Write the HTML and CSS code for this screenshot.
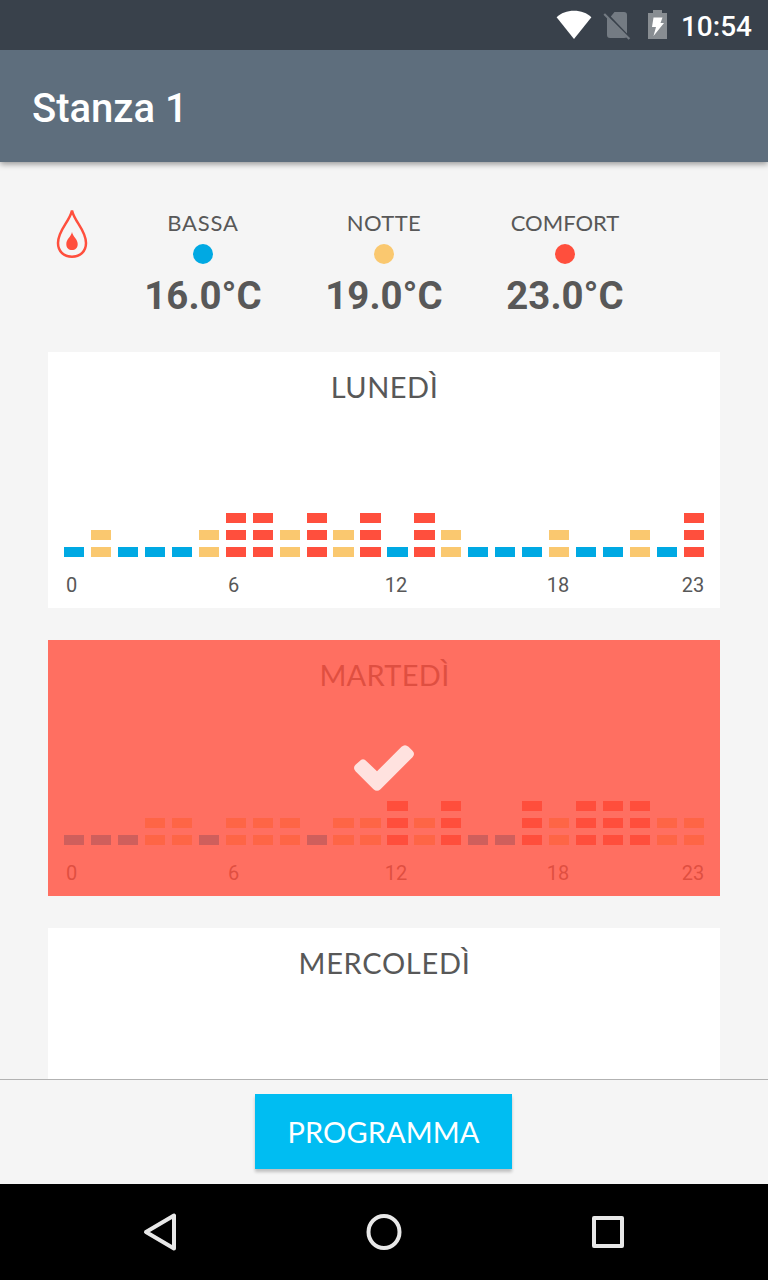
FILE: index.html
```html
<!DOCTYPE html>
<html lang="it">
<head>
    <meta charset="UTF-8">
    <title>Stanza 1</title>
    <link rel="stylesheet" href="styles.css">
</head>
<body>
    <div class="status-bar">
        <svg class="wifi" width="36" height="29" viewBox="0 0 36 29"><path d="M18 29L.6 7.2C5 3 11 .8 18 .8S31 3 35.4 7.2z" fill="#fff"/></svg>
        <svg class="no-sim" width="28" height="28" viewBox="0 0 28 28">
            <path d="M11.500 0H21q3 0 3 3v18.500L7.800 4.500zM4 5L24 25q-1 1-3 1H7q-3 0-3-3z" fill="#747b83"/>
            <path d="M1.200 2L26.400 27" stroke="#747b83" stroke-width="2.200"/>
        </svg>
        <svg class="battery" width="20" height="29" viewBox="0 0 20 29">
            <path d="M0 3h5V0h9v3h5v26H0z" fill="#888d92"/>
            <path d="M5.500 7.500h9L12.500 13H16L5.500 26l2.500-9H4z" fill="#fff"/>
        </svg>
        <span class="clock">10:54</span>
    </div>

    <div class="header">
        <h1>Stanza 1</h1>
    </div>

    <div class="content">
        <div class="legend">
            <svg class="flame" width="32" height="50" viewBox="0 0 32 50">
                <path d="M16 2.500C13.500 14 2 22 2 35c0 8 5.500 13.700 14 13.700s14-5.700 14-13.700C30 22 18.500 14 16 2.500z" fill="none" stroke="#ff4f3d" stroke-width="2.500"/>
                <path d="M16 24c-1 5-5.700 7-5.700 12 0 4 2.500 6 5.700 6s5.700-2 5.700-6c0-5-4.700-7-5.700-12z" fill="#ff4f3d"/>
            </svg>
            <div class="temp">
                <span class="temp-name bassa">BASSA</span>
                <span class="dot low"></span>
                <span class="temp-value">16.0°C</span>
            </div>
            <div class="temp">
                <span class="temp-name notte">NOTTE</span>
                <span class="dot night"></span>
                <span class="temp-value">19.0°C</span>
            </div>
            <div class="temp">
                <span class="temp-name comfort">COMFORT</span>
                <span class="dot comf"></span>
                <span class="temp-value">23.0°C</span>
            </div>
        </div>

        <div class="day">
            <h2 class="lun">LUNEDÌ</h2>
            <div class="chart" data-levels="121112332323132111211213"></div>
            <div class="hours"></div>
        </div>

        <div class="day">
            <h2 class="mar">MARTEDÌ</h2>
            <div class="chart" data-levels="111221222122323113233322"></div>
            <div class="hours"></div>
            <div class="selected">
                <svg width="60" height="46" viewBox="0 0 60 46"><path d="M5.500 16.200Q9 12.500 12.500 16.200L23 26.300 47.500 1.800Q51-1.500 54.500 1.800L58.500 5.800Q61.500 9 58.500 12.200L26.500 44.200Q23 47.500 19.500 44.200L1.500 26.200Q-1.500 23 1.500 19.800z" fill="#fff" fill-opacity=".8"/></svg>
            </div>
        </div>

        <div class="day">
            <h2 class="mer">MERCOLEDÌ</h2>
        </div>
    </div>

    <div class="footer">
        <button class="btn">PROGRAMMA</button>
    </div>

    <div class="nav-bar">
        <svg width="36" height="40" viewBox="0 0 36 40"><path d="M32 3.500v33L4 20z"/></svg>
        <svg width="36" height="40" viewBox="0 0 36 40"><ellipse cx="18" cy="20" rx="15.500" ry="16"/></svg>
        <svg width="36" height="40" viewBox="0 0 36 40"><rect x="4" y="6" width="28" height="28"/></svg>
    </div>

    <script>
        const names = ['', 'low', 'night', 'comf'];

        // one column per hour, level 1-3 is the number of blocks
        document.querySelectorAll('.chart').forEach(chart => {
            chart.innerHTML = chart.dataset.levels.split('').map(level =>
                '<div class="bar">' + `<i class="${names[level]}"></i>`.repeat(level) + '</div>'
            ).join('');
        });

        document.querySelectorAll('.hours').forEach(row => {
            row.innerHTML = [0, 6, 12, 18, 23].map(h => `<span class="h${h}">${h}</span>`).join('');
        });
    </script>
</body>
</html>
```

FILE: styles.css
```css
body {
    font-family: Roboto, sans-serif;
    margin: 0;
    height: 1280px;
    display: flex;
    flex-direction: column;
    overflow: hidden;
    background: #f5f5f5;
    color: #585858;
}

svg {
    display: block;
}

.status-bar {
    height: 50px;
    box-sizing: border-box;
    flex: none;
    display: flex;
    justify-content: flex-end;
    align-items: flex-start;
    padding: 10px 16px 0 0;
    background: #39414b;
    z-index: 2;
}

.no-sim {
    margin: 2px 0 0 11px;
}

.battery {
    margin-left: 17px;
}

.clock {
    margin: 0 0 0 13px;
    font-size: 28px;
    font-weight: 500;
    line-height: 33px;
    color: #fff;
}

.header {
    height: 112px;
    flex: none;
    display: flex;
    align-items: center;
    padding-left: 32px;
    background: #5e6e7d;
    box-shadow: 0 2px 6px rgba(0,0,0,0.4);
    z-index: 1;
}

.header h1 {
    margin: 4px 0 0;
    font-size: 40px;
    font-weight: 500;
    color: #fff;
}

.content {
    flex: 1;
    min-height: 0;
    overflow: hidden;
    padding: 0 48px;
}

.legend {
    height: 190px;
    box-sizing: border-box;
    display: flex;
    padding: 46px 0 0 8px;
}

.flame {
    margin-right: 24px;
}

.temp {
    width: 181px;
    display: flex;
    flex-direction: column;
    align-items: center;
}

.temp-name {
    padding-left: 1px;
    font-family: Lato, sans-serif;
    font-size: 22px;
    line-height: 30px;
    height: 36px;
}

.bassa {
    letter-spacing: 0.8px;
}

.notte {
    letter-spacing: 0.4px;
}

.dot {
    width: 20px;
    height: 20px;
    border-radius: 50%;
}

.low {
    background: #00a9e3;
}

.night {
    background: #fac86f;
}

.comf {
    background: #ff4f3d;
}

.temp-value {
    margin-top: 9px;
    padding-left: 1px;
    font-size: 38.4px;
    font-weight: 700;
    line-height: 46px;
}

.day {
    position: relative;
    height: 256px;
    box-sizing: border-box;
    margin-bottom: 32px;
    padding: 16px;
    background: #fff;
}

.day h2 {
    margin: 0;
    height: 40px;
    padding-left: 1px;
    font-family: Lato, sans-serif;
    font-size: 29px;
    font-weight: 400;
    line-height: 38px;
    text-align: center;
}

.day .lun {
    letter-spacing: 0.5px;
}

.day .mar {
    letter-spacing: 0.3px;
}

.day .mer {
    letter-spacing: 0.7px;
}

/* 24 hours over 640px, hour 9 takes the missing pixel */
.chart, .hours {
    display: grid;
    grid-template-columns: repeat(9, 27px) 26px repeat(13, 27px) 20px;
}

.chart {
    height: 149px;
}

.bar {
    width: 20px;
    display: flex;
    flex-direction: column;
    justify-content: flex-end;
    gap: 7px;
}

.bar:nth-child(n+11):nth-child(-n+14) {
    width: 21px;
}

.bar i {
    height: 10px;
}

.hours {
    margin-top: 16px;
    font-size: 20px;
    line-height: 24px;
}

.hours span {
    grid-row: 1;
    width: 18px;
    display: flex;
    justify-content: center;
}

.hours .h0 {
    grid-column: 1;
    width: 15px;
}

.hours .h6 {
    grid-column: 7;
    width: 15px;
}

.hours .h12 {
    grid-column: 13;
}

.hours .h18 {
    grid-column: 19;
}

.hours .h23 {
    grid-column: 24;
}

.selected {
    position: absolute;
    inset: 0;
    display: flex;
    justify-content: center;
    align-items: center;
    background: rgba(255,78,60,0.81);
}

.footer {
    height: 105px;
    flex: none;
    box-sizing: border-box;
    display: flex;
    justify-content: center;
    align-items: flex-start;
    padding: 14px 1px 0 0;
    border-top: 1px solid #b2b2b2;
    background: #f5f5f5;
}

.btn {
    width: 257px;
    height: 75px;
    padding: 0 0 1px;
    border: none;
    background: #00bdf2;
    box-shadow: 0 3px 3px rgba(0,0,0,0.22);
    font-family: Lato, sans-serif;
    font-size: 29px;
    letter-spacing: 0.1px;
    color: #fff;
}

.nav-bar {
    height: 96px;
    flex: none;
    box-sizing: border-box;
    display: flex;
    justify-content: space-between;
    align-items: center;
    padding: 0 142px;
    background: #000;
}

.nav-bar svg {
    fill: none;
    stroke: #e8e8e8;
    stroke-width: 4;
    stroke-linejoin: round;
}
```
